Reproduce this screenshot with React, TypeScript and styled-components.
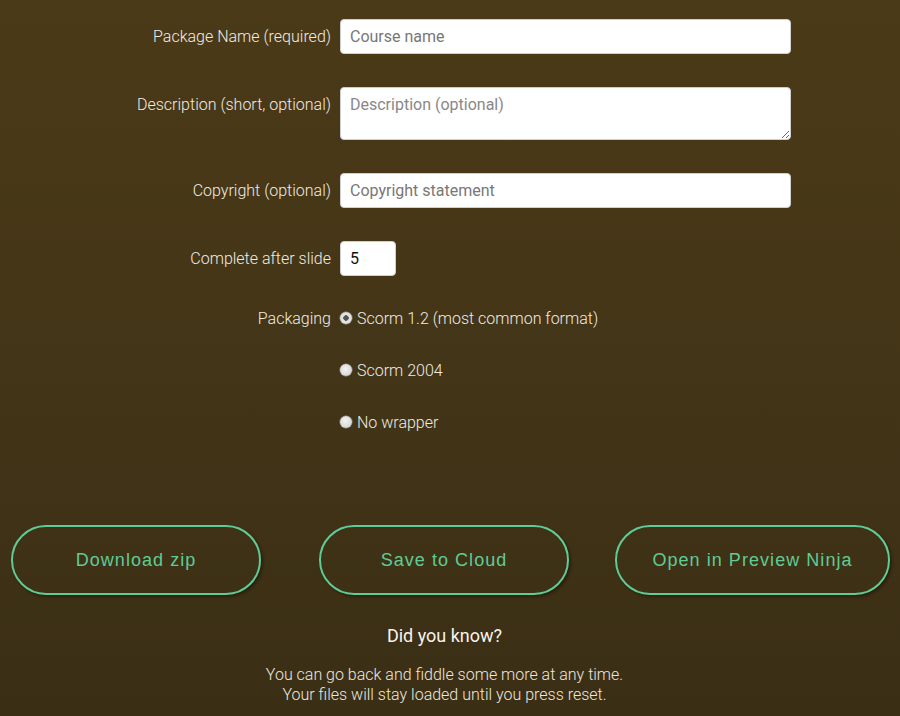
import React from "react";
import styled, { createGlobalStyle } from "styled-components";

const Global = createGlobalStyle`
  html, body { margin: 0; padding: 0; }
  body {
    background: linear-gradient(180deg, #4b3a17 0%, #433517 50%, #3a2e15 100%);
    min-height: 716px;
    font-family: Roboto, "Liberation Sans", sans-serif;
    color: #ece8df;
    overflow: hidden;
  }
`;

const Page = styled.div`
  width: 900px;
  height: 716px;
  display: flex;
  flex-direction: column;
`;

const Form = styled.div`
  display: grid;
  grid-template-columns: 331px 451px;
  column-gap: 9px;
  row-gap: 33px;
  padding-top: 19px;
  align-items: start;
`;

const Label = styled.label`
  text-align: right;
  font-size: 16px;
  line-height: 19px;
  font-weight: 300;
  padding-top: 8px;
  color: #f0ece4;
  white-space: nowrap;
`;

const Input = styled.input<{ $w?: number }>`
  box-sizing: border-box;
  width: ${(p) => (p.$w ? `${p.$w}px` : "100%")};
  height: 35px;
  margin: 0;
  padding: 0 9px;
  border: 1px solid #cfcfcf;
  border-radius: 4px;
  background: #fff;
  font-family: Roboto, "Liberation Sans", sans-serif;
  font-size: 16px;
  color: #111;
  outline: none;
  &::placeholder { color: #777; }
`;

const TextArea = styled.textarea`
  box-sizing: border-box;
  display: block;
  width: 100%;
  height: 53px;
  margin: 0;
  padding: 7px 9px;
  border: 1px solid #cfcfcf;
  border-radius: 4px;
  background: #fff;
  font-family: Roboto, "Liberation Sans", sans-serif;
  font-size: 16px;
  line-height: 19px;
  color: #111;
  outline: none;
  &::placeholder { color: #888; }
`;

const PackLabel = styled(Label)`
  padding-top: 0;
`;

const RadioGroup = styled.div`
  display: flex;
  flex-direction: column;
  gap: 33px;
`;

const RadioLabel = styled.label`
  display: flex;
  align-items: center;
  gap: 5px;
  font-size: 16px;
  line-height: 19px;
  font-weight: 300;
  color: #f0ece4;
`;

const Radio = styled.input.attrs({ type: "radio" })`
  appearance: none;
  margin: 0;
  width: 12px;
  height: 12px;
  border-radius: 50%;
  background: radial-gradient(circle at 45% 40%, #f4f4f4 0%, #dcdcdc 60%, #bdbdbd 100%);
  box-shadow: 0 0 0 0.5px #9a9a9a;
  position: relative;
  top: -1px;
  &:checked {
    background: radial-gradient(circle, #555 0 2.5px, #e6e6e6 3px, #d2d2d2 100%);
  }
`;

const Buttons = styled.div`
  display: flex;
  align-items: center;
  padding: 0 10px 0 11px;
  margin-top: 93px;
`;

const Button = styled.button<{ $w: number; $ml: number }>`
  box-sizing: border-box;
  width: ${(p) => p.$w}px;
  height: 70px;
  margin-left: ${(p) => p.$ml}px;
  border: 2px solid #5fcc97;
  border-radius: 35px;
  background: transparent;
  color: #5fcc97;
  font-family: "Liberation Sans", Arial, sans-serif;
  font-size: 18px;
  letter-spacing: 1.05px;
  box-shadow: 2px 2px 3px rgba(20, 14, 4, 0.45);
  cursor: pointer;
`;

const Info = styled.div`
  text-align: center;
  padding-right: 11px;
`;

const InfoTitle = styled.h3`
  margin: 30px 0 0;
  font-size: 18px;
  line-height: 22px;
  font-weight: 400;
  color: #f7f4ee;
`;

const InfoText = styled.p`
  margin: 18px 0 0;
  font-size: 16px;
  line-height: 20px;
  font-weight: 300;
  color: #ece8df;
`;

export default function App() {
  return (
    <Page>
      <Global />
      <Form>
        <Label>Package Name (required)</Label>
        <Input placeholder="Course name" />
        <Label>Description (short, optional)</Label>
        <TextArea placeholder="Description (optional)" />
        <Label>Copyright (optional)</Label>
        <Input placeholder="Copyright statement" />
        <Label>Complete after slide</Label>
        <Input $w={56} type="text" defaultValue="5" />
        <PackLabel as="div">Packaging</PackLabel>
        <RadioGroup>
          <RadioLabel>
            <Radio name="pkg" defaultChecked /> Scorm 1.2 (most common format)
          </RadioLabel>
          <RadioLabel>
            <Radio name="pkg" /> Scorm 2004
          </RadioLabel>
          <RadioLabel>
            <Radio name="pkg" /> No wrapper
          </RadioLabel>
        </RadioGroup>
      </Form>
      <Buttons>
        <Button $w={250} $ml={0}>Download zip</Button>
        <Button $w={250} $ml={58}>Save to Cloud</Button>
        <Button $w={275} $ml={46}>Open in Preview Ninja</Button>
      </Buttons>
      <Info>
        <InfoTitle>Did you know?</InfoTitle>
        <InfoText>
          You can go back and fiddle some more at any time.
          <br />
          Your files will stay loaded until you press reset.
        </InfoText>
      </Info>
    </Page>
  );
}
